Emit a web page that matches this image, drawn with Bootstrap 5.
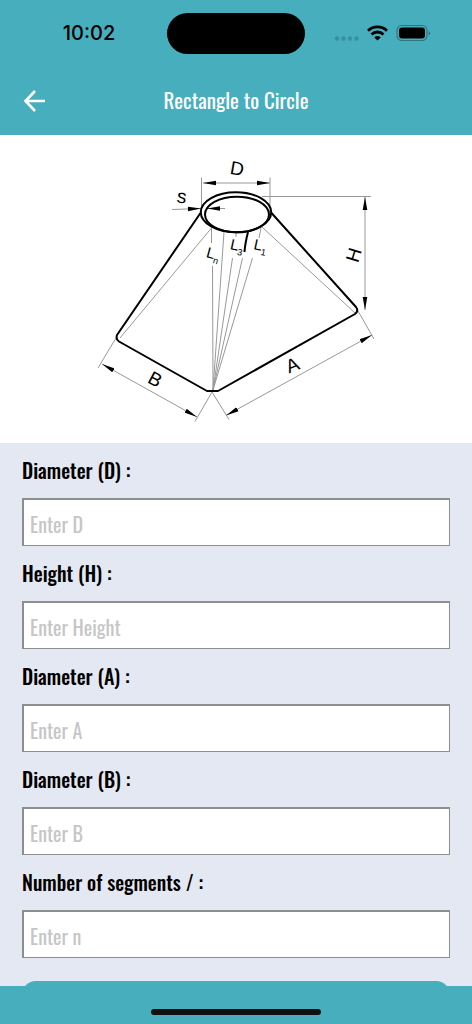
<!DOCTYPE html>
<html lang="en">
<head>
<meta charset="utf-8">
<meta name="viewport" content="width=device-width, initial-scale=1">
<title>Rectangle to Circle</title>
<link rel="stylesheet" href="https://cdn.jsdelivr.net/npm/bootstrap@5.3.0/dist/css/bootstrap.min.css">
<style>
  :root { --teal: #46aebd; --mist: #e4e8f2; }
  body { font-family: Oswald, "Roboto Condensed", "Liberation Sans Narrow", "Liberation Sans", sans-serif; background: var(--teal); }
  .teal-bar { background: var(--teal); }
  .status-bar { height: 66px; display: grid; grid-template-columns: 1fr 138px 1fr; align-items: center; }
  .clock { font: 500 20px/24px Inter, sans-serif; color: #000; padding-left: 11px; }
  .island { height: 41px; border-radius: 21px; background: #000; }
  .status-icons { padding-left: 28px; }
  .title-row { height: 69px; padding-bottom: 2px; display: grid; grid-template-columns: 70px 1fr 70px; align-items: center; }
  .title-row h1 { font-size: 21px; line-height: 30px; font-weight: 400; }
  .back-btn { padding: 0 0 0 23px; border: 0; }
  .form-area { background: var(--mist); padding: 12px 22px 24px; }
  .form-area .form-label { font-size: 20px; line-height: 30px; font-weight: 500; color: #000; margin-bottom: 13px; display: block; }
  .form-area .form-control { height: 48px; padding: 2px 6px 0; border: 1px solid #8c8e90; border-top-width: 2px; border-left-width: 2px; border-radius: 0; font-size: 20px; line-height: 30px; background: #fff; }
  .form-area .form-control::placeholder { color: #c6c6c6; opacity: 1; }
  .field { margin-bottom: 12px; }
  .submit-btn { height: 50px; border: 0; border-radius: 14px; background: var(--teal); margin-top: 11px; }
  .home-area { height: 38px; padding-top: 23px; }
  .home-pill { width: 36%; height: 6px; border-radius: 3px; background: #111; }
  .thin { stroke: #999; stroke-width: 1; fill: none; }
  .bold-line { stroke: #000; stroke-width: 2; fill: none; stroke-linejoin: round; }
  .dim { font: 19px "Liberation Sans", sans-serif; text-anchor: middle; }
  .len { font: 15px "Liberation Sans", sans-serif; }
  .sub-len { font-size: 9px; }
</style>
</head>
<body class="vh-100 d-flex flex-column overflow-hidden">
<header class="teal-bar flex-shrink-0">
  <div class="status-bar">
    <div class="clock text-center">10:02</div>
    <div class="island"></div>
    <div class="status-icons">
      <svg width="98" height="24" viewBox="333 21 98 24" aria-hidden="true">
        <g fill="#39909d"><circle cx="337" cy="37.500" r="2.200"/><circle cx="343.500" cy="37.500" r="2.200"/><circle cx="350" cy="37.500" r="2.200"/><circle cx="356.500" cy="37.500" r="2.200"/></g>
        <g fill="none" stroke="#000" stroke-width="2.800"><path d="M368 29.700a13.800 13.800 0 0 1 19 0"/><path d="M371.500 33.400a8.700 8.700 0 0 1 12 0"/></g>
        <path d="M374.300 36.400a4.800 4.800 0 0 1 6.400 0L377.500 39.600Z"/>
        <rect x="397" y="24.500" width="30" height="15" rx="4.800" fill="none" stroke="#2f7680" stroke-width="1.200"/>
        <rect x="399" y="26.500" width="26" height="11" rx="3"/>
        <path d="M428.500 30v4.500q1.800-.6 1.800-2.200T428.500 30Z" fill="#2f7680"/>
      </svg>
    </div>
  </div>
  <div class="title-row text-white">
    <button class="btn back-btn text-start text-white" type="button" aria-label="Back">
      <svg width="24" height="24" viewBox="0 0 24 24" fill="none" stroke="currentColor" stroke-width="2.600" aria-hidden="true"><path d="M22 12H3M12 2 2.500 12 12 22"/></svg>
    </button>
    <h1 class="text-center m-0">Rectangle to Circle</h1>
  </div>
</header>

<main class="flex-grow-1 overflow-hidden">
  <figure class="m-0 bg-white">
    <svg class="d-block w-100" viewBox="0 135 472 308" role="img" aria-label="Rectangle to circle transition with dimensions">
      <defs>
        <marker id="arrow" viewBox="0 0 13 6" refX="13" refY="3" markerWidth="13" markerHeight="6" markerUnits="userSpaceOnUse" orient="auto-start-reverse"><path d="M13 3 0 .7V5.300Z" fill="#000" stroke="none"/></marker>
      </defs>
      <g class="thin">
        <path d="M201.500 177.500V211M270 177.500V212M262 196.500H371"/>
        <path d="M211.500 228 120 338M262 227 355 313"/>
        <path d="M211.500 228V243M212.500 266 213 390M224 232 213 390M236 232V237M232.500 258 213 390M242.500 258 213 390M261 228 259 238M252.500 258 213 390"/>
        <path d="M116 338 98 368M212 392 195 421.500M212 392 229 419.500M358 311 374 339"/>
        <path d="M203 183H270" marker-start="url(#arrow)" marker-end="url(#arrow)"/>
        <path d="M365 197V310" marker-start="url(#arrow)" marker-end="url(#arrow)"/>
        <path d="M102 364 197 417" marker-start="url(#arrow)" marker-end="url(#arrow)"/>
        <path d="M226 415.500 372 335" marker-start="url(#arrow)" marker-end="url(#arrow)"/>
        <path d="M172 209.500 201 208.500" marker-end="url(#arrow)"/>
        <path d="M225 208.500H207" marker-end="url(#arrow)"/>
      </g>
      <g class="bold-line">
        <path d="M200.500 213 117 335Q115.500 339 119 341.500L207 391H218L355 314Q359 311 356 307L271.500 213"/>
        <ellipse cx="236" cy="212.300" rx="35.200" ry="20"/>
        <ellipse cx="237" cy="214.500" rx="32" ry="17.800"/>
        <path d="M248 232Q245 244 244.500 252"/>
      </g>
      <text class="dim" transform="translate(236 175) rotate(10)">D</text>
      <text class="dim" transform="translate(181 203) rotate(8)">s</text>
      <text class="dim" transform="translate(360 257) rotate(-73)">H</text>
      <text class="dim" transform="translate(152 385) rotate(28)">B</text>
      <text class="dim" transform="translate(295 371) rotate(-22)">A</text>
      <text class="len" transform="translate(205.500 257) rotate(15)">L<tspan class="sub-len" dy="4">n</tspan></text>
      <text class="len" transform="translate(229.500 249) rotate(12)">L<tspan class="sub-len" dy="4">3</tspan></text>
      <text class="len" transform="translate(253 249) rotate(12)">L<tspan class="sub-len" dy="4">1</tspan></text>
    </svg>
  </figure>
  <form class="form-area">
    <div class="field"><label class="form-label" for="diaD">Diameter (D) :</label><input class="form-control" id="diaD" type="text" placeholder="Enter D"></div>
    <div class="field"><label class="form-label" for="height">Height (H) :</label><input class="form-control" id="height" type="text" placeholder="Enter Height"></div>
    <div class="field"><label class="form-label" for="diaA">Diameter (A) :</label><input class="form-control" id="diaA" type="text" placeholder="Enter A"></div>
    <div class="field"><label class="form-label" for="diaB">Diameter (B) :</label><input class="form-control" id="diaB" type="text" placeholder="Enter B"></div>
    <div class="field"><label class="form-label" for="segments">Number of segments / :</label><input class="form-control" id="segments" type="text" placeholder="Enter n"></div>
    <button class="btn submit-btn w-100" type="submit" aria-label="Calculate"></button>
  </form>
</main>

<footer class="teal-bar home-area flex-shrink-0"><div class="home-pill mx-auto"></div></footer>
<script src="https://cdn.jsdelivr.net/npm/bootstrap@5.3.0/dist/js/bootstrap.bundle.min.js"></script>
</body>
</html>
